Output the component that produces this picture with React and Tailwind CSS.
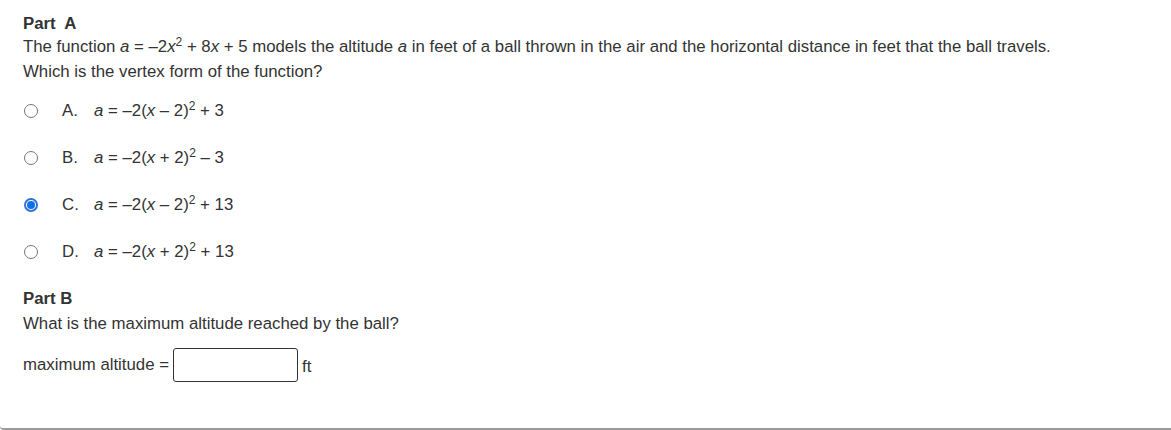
import React from 'react'

const options = [
  { key: 'A', sign1: '–', sign2: '+', k: '3' },
  { key: 'B', sign1: '+', sign2: '–', k: '3' },
  { key: 'C', sign1: '–', sign2: '+', k: '13' },
  { key: 'D', sign1: '+', sign2: '+', k: '13' },
]

const Radio = ({ checked }) =>
  checked ? (
    <span className="w-[14px] h-[14px] rounded-full border-2 border-[#2f72d8] flex items-center justify-center">
      <span className="w-[8px] h-[8px] rounded-full bg-[#0f6fe6]"></span>
    </span>
  ) : (
    <span className="w-[14px] h-[14px] rounded-full border border-[#767676] bg-white"></span>
  )

export default function App() {
  return (
    <div className="w-[1171px] h-[430px] bg-white text-[#333] font-['Liberation_Sans',Arial,sans-serif] text-[16.8px]">
      <div className="h-[430px] border-b-2 border-[#9a9a9a] rounded-bl-[4px] px-[23px] pt-[14px]">
        <div className="font-bold leading-[20px]">Part&nbsp; A</div>
        <div className="leading-[24px] mt-[1px]">
          The function <i>a</i> = –2<i>x</i>
          <sup className="text-[12px]">2</sup> + 8<i>x</i> + 5 models the altitude <i>a</i> in feet of a
          ball thrown in the air and the horizontal distance in feet that the ball travels.
        </div>
        <div className="leading-[24px] mt-[1px]">Which is the vertex form of the function?</div>

        <div className="mt-[17px] flex flex-col gap-[27px]">
          {options.map((o) => (
            <div key={o.key} className="flex items-center h-[20px]">
              <span className="ml-[1px] w-[14px] flex justify-center">
                <Radio checked={o.key === 'C'} />
              </span>
              <span className="ml-[24px] w-[32px] text-[#333]">{o.key}.</span>
              <span>
                <i>a</i> = –2(<i>x</i> {o.sign1} 2)
                <sup className="text-[12px]">2</sup> {o.sign2} {o.k}
              </span>
            </div>
          ))}
        </div>

        <div className="font-bold leading-[20px] mt-[27px]">Part B</div>
        <div className="leading-[24px] mt-[3px]">What is the maximum altitude reached by the ball?</div>
        <div className="flex items-center mt-[12px]">
          <span>maximum altitude =</span>
          <input
            type="text"
            className="ml-[4px] w-[125px] h-[34px] border border-[#333] rounded-[3px] outline-none"
          />
          <span className="ml-[4px] self-start mt-[6px]">ft</span>
        </div>
      </div>
    </div>
  )
}
